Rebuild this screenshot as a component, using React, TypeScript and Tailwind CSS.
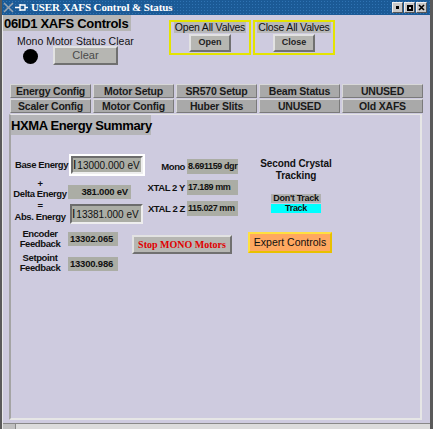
import React from "react";

// motif style bevels
const raised =
  "border-2 border-t-[#e2e2e2] border-l-[#e2e2e2] border-b-[#707070] border-r-[#707070]";
const sunken =
  "border-2 border-t-[#6c6c6c] border-l-[#6c6c6c] border-b-[#eeeeee] border-r-[#eeeeee]";
const lbl =
  "text-center text-[9.5px] font-bold tracking-[-0.4px] text-[#111] whitespace-nowrap";

const tabs = [
  ["Energy Config", "Motor Setup", "SR570 Setup", "Beam Status", "UNUSED"],
  ["Scaler Config", "Motor Config", "Huber Slits", "UNUSED", "Old XAFS"],
];

const Readback: React.FC<{ value: string; className?: string }> = ({
  value,
  className = "",
}) => (
  <div
    className={`bg-[#abada5] flex items-center pr-[3px] text-[9.5px] font-bold tracking-[-0.2px] text-[#111] whitespace-nowrap ${className}`}>
    {value}
  </div>
);

const TitleBar = () => (
  <div className="h-[15px] shrink-0 flex items-center bg-[#1b5a96] bg-[radial-gradient(circle,#2f73b3_0.6px,transparent_0.8px)] bg-[length:3px_3px]">
    <svg width="11" height="11" viewBox="0 0 11 11" className="ml-[1px]">
      <path d="M1 1 L10 10 M10 1 L1 10" stroke="#9aa4b0" strokeWidth="1.5" />
    </svg>
    <svg width="13" height="9" viewBox="0 0 13 9" className="ml-[1px]">
      <path d="M0 4.5 H5 M5 1 V8 M5 2 H10 V7 H5 M10 4.5 H13" stroke="#fff" strokeWidth="1.4" fill="none" />
    </svg>
    <span className="ml-[3px] text-white font-bold text-[11px] tracking-[-0.1px] leading-none whitespace-nowrap font-['Liberation_Serif',serif]">
      USER XAFS Control &amp; Status
    </span>
    <div className="ml-auto mr-[3px] flex gap-[1px]">
      {["dot", "box", "x"].map((k) => (
        <div
          key={k}
          className="w-[11px] h-[11px] bg-[#c8c8c8] border border-t-[#f0f0f0] border-l-[#f0f0f0] border-b-[#555] border-r-[#555] flex items-center justify-center">
          {k === "dot" && <div className="w-[3px] h-[3px] bg-black" />}
          {k === "box" && <div className="w-[6px] h-[6px] border-2 border-black" />}
          {k === "x" && (
            <svg width="7" height="7" viewBox="0 0 7 7">
              <path d="M1 1 L6 6 M6 1 L1 6" stroke="#000" strokeWidth="1.6" />
            </svg>
          )}
        </div>
      ))}
    </div>
  </div>
);

const ValveBox: React.FC<{ label: string; btn: string }> = ({ label, btn }) => (
  <div className="w-[82px] h-[35px] border-2 border-[#e4e400] flex flex-col items-center">
    <div className="bg-[#b8b8b8] text-[10.5px] leading-[11px] tracking-[-0.2px] text-[#111] px-[1px] whitespace-nowrap">
      {label}
    </div>
    <div
      className={`mt-[1px] w-[42px] h-[18px] bg-[#b6b6b2] ${raised} flex items-center justify-center text-[9px] font-bold text-[#222]`}>
      {btn}
    </div>
  </div>
);

export default function App() {
  return (
    <div className="w-[433px] h-[429px] flex flex-col bg-[#cecbdf] border-l-2 border-l-[#5a5a5a] border-r-[3px] border-r-[#5a5a5a] font-['Liberation_Sans',sans-serif] overflow-hidden">
      <TitleBar />

      <div className="flex-1 flex flex-col border-l border-l-[#e8e8e8]">
        {/* header area */}
        <div className="flex h-[69px] shrink-0">
          <div className="w-[166px] flex flex-col">
            <div className="w-[128px] h-[16px] bg-[#b5b5b5] flex items-center pl-px text-[13px] tracking-[-0.3px] font-bold leading-none text-black whitespace-nowrap">
              06ID1 XAFS Controls
            </div>
            <div className="mt-[5px] ml-[14px] text-[10.5px] leading-[11px] text-[#111] whitespace-nowrap">
              Mono Motor Status Clear
            </div>
            <div className="flex items-start -mt-px">
              <div className="ml-[20px] mt-[3px] w-[15px] h-[15px] rounded-full bg-black" />
              <div
                className={`ml-[15px] w-[65px] h-[19px] bg-[#b6b6b2] ${raised} flex items-center justify-center text-[11px] text-[#4a4a4a]`}>
                Clear
              </div>
            </div>
          </div>
          <div className="mt-[5px] flex gap-[2px]">
            <ValveBox label="Open All Valves" btn="Open" />
            <ValveBox label="Close All Valves" btn="Close" />
          </div>
        </div>

        {/* related display tabs */}
        <div className="ml-[7px] grid grid-cols-[repeat(5,81px)] gap-x-[2px] gap-y-px shrink-0">
          {tabs.flat().map((t, i) => (
            <div
              key={i}
              className="h-[14px] bg-[#a9a9a9] border border-t-[#d8d8d8] border-l-[#d8d8d8] border-b-[#7a7a7a] border-r-[#7a7a7a] flex items-center justify-center text-[10.5px] font-bold tracking-[-0.2px] text-[#1a1a1a] leading-none whitespace-nowrap">
              {t}
            </div>
          ))}
        </div>

        {/* energy summary panel */}
        <div className="ml-[6px] mt-px w-[413px] h-[306px] shrink-0 border-l-2 border-l-[#a4a4a4] border-t border-t-[#e6e6e6] border-r-2 border-r-[#e6e6e6] border-b-2 border-b-[#e6e6e6] flex flex-col">
          <div className="w-[140px] h-[20px] bg-[#b5b5b8] flex items-center text-[13px] tracking-[-0.4px] font-bold text-black leading-none whitespace-nowrap">
            HXMA Energy Summary
          </div>

          <div className="flex items-start mt-[19px] ml-[4px]">
            {/* setpoints */}
            <div className="w-[130px] flex flex-col">
              <div className="flex items-center h-[22px]">
                <div className={`w-[50px] leading-[10px] ${lbl}`}>Base Energy</div>
                <div className="ml-[4px] w-[76px] h-[22px] border-2 border-white">
                  <div className={`h-full bg-[#abada5] ${sunken} flex items-center text-[10px] text-[#111] whitespace-nowrap`}>
                    <span className="text-[12px] leading-none mr-px font-light">I</span>13000.000 eV
                  </div>
                </div>
              </div>
              <div className="flex items-end mt-[4px] h-[20px]">
                <div className={`w-[50px] flex flex-col items-center pb-px ${lbl}`}>
                  <span className="leading-[7px]">+</span>
                  <span className="mt-[2px] leading-[10px]">Delta Energy</span>
                </div>
                <Readback value="381.000 eV" className="ml-[3px] mb-px w-[63px] h-[14px] justify-end" />
              </div>
              <div className="flex items-end h-[24px]">
                <div className={`w-[50px] flex flex-col items-center pb-[2px] ${lbl}`}>
                  <span className="leading-[7px]">=</span>
                  <span className="mt-[3px] leading-[10px]">Abs. Energy</span>
                </div>
                <div className={`ml-[5px] w-[73px] h-[20px] bg-[#abada5] ${sunken} flex items-center text-[10px] text-[#111] whitespace-nowrap`}>
                  <span className="text-[12px] leading-none mr-px font-light">I</span>13381.000 eV
                </div>
              </div>
            </div>

            {/* mono readbacks */}
            <div className="ml-[2px] mt-[5px] flex flex-col gap-[6px]">
              {[
                ["Mono", "8.691159 dgr"],
                ["XTAL 2 Y", "17.189 mm"],
                ["XTAL 2 Z", "115.027 mm"],
              ].map(([l, v]) => (
                <div key={l} className="flex items-center">
                  <div className="w-[38px] text-right text-[9.5px] font-bold tracking-[-0.4px] text-[#111] leading-none whitespace-nowrap">
                    {l}
                  </div>
                  <div className="ml-[2px] w-[51px] h-[15px] bg-[#abada5] flex items-center pl-px text-[9px] font-bold tracking-[-0.4px] text-[#111] whitespace-nowrap">
                    {v}
                  </div>
                </div>
              ))}
            </div>

            {/* tracking */}
            <div className="ml-[10px] mt-[4px] w-[96px] flex flex-col items-center">
              <div className="text-center text-[10px] font-bold tracking-[-0.1px] leading-[12px] text-[#111] whitespace-nowrap">
                Second Crystal
                <br />
                Tracking
              </div>
              <div className="mt-[12px] w-[50px] h-[9px] bg-[#b0b0b0] flex items-center justify-center text-[9px] font-bold tracking-[-0.3px] text-[#111] leading-none whitespace-nowrap">
                Don't Track
              </div>
              <div className="mt-px w-[50px] h-[9px] bg-[#00ffff] flex items-center justify-center text-[9px] font-bold tracking-[-0.3px] text-[#111] leading-none whitespace-nowrap">
                Track
              </div>
            </div>
          </div>

          <div className="flex items-start mt-[5px] ml-[4px]">
            <div className="flex flex-col">
              <div className="flex items-center h-[20px]">
                <div className={`w-[50px] leading-[10px] ${lbl}`}>
                  Encoder
                  <br />
                  Feedback
                </div>
                <Readback value="13302.065" className="ml-[3px] w-[50px] h-[14px] justify-center" />
              </div>
              <div className="flex items-center mt-[4px] h-[20px]">
                <div className={`w-[50px] leading-[10px] ${lbl}`}>
                  Setpoint
                  <br />
                  Feedback
                </div>
                <Readback value="13300.986" className="ml-[3px] mt-[2px] w-[50px] h-[14px] justify-center" />
              </div>
            </div>
            <div
              className={`ml-[14px] mt-[6px] w-[100px] h-[19px] bg-[#b6b6b2] ${raised} flex items-center justify-center text-[10px] font-bold text-[#e00000] whitespace-nowrap font-['Liberation_Serif',serif]`}>
              Stop MONO Motors
            </div>
            <div className="ml-[16px] mt-[3px] w-[84px] h-[21px] bg-[#ffa860] border-2 border-t-[#ffe040] border-l-[#ffe040] border-b-[#e8c000] border-r-[#e8c000] flex items-center justify-center text-[10.5px] text-[#111] whitespace-nowrap">
              Expert Controls
            </div>
          </div>
        </div>

        <div className="mt-auto h-[6px] flex border-t border-t-[#888]">
          <div className="w-[13px] bg-[#c0c0c0] border-r border-r-[#888]" />
          <div className="flex-1 bg-[#dcdcdc]" />
        </div>
      </div>
    </div>
  );
}
